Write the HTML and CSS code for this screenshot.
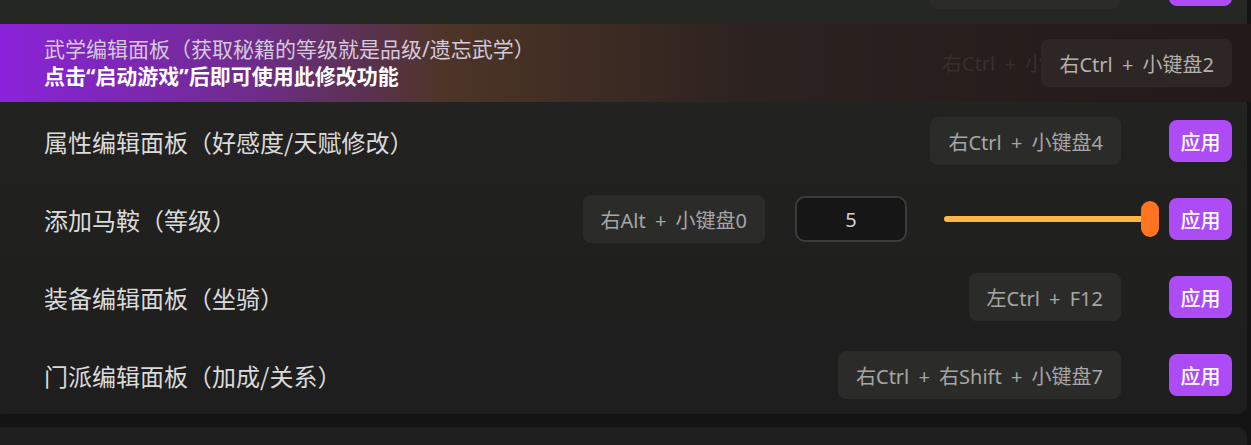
FILE: index.html
```html
<!DOCTYPE html>
<html lang="zh-CN">
<head>
    <meta charset="UTF-8">
    <meta name="viewport" content="width=device-width, initial-scale=1.0">
    <title>修改功能</title>

    <link rel="stylesheet" href="styles.css">
</head>
<body>
    <div class="panel">
        <div class="row">
            <div class="label">招式编辑面板</div>
            <div class="key">右Ctrl + 小键盘1</div>
            <button class="apply">应用</button>
        </div>

        <!-- hovered row: tip replaces label -->
        <div class="row hot">
            <div class="tip">
                <div class="tip-title">武学编辑面板（获取秘籍的等级就是品级/遗忘武学）</div>
                <div class="tip-note">点击“启动游戏”后即可使用此修改功能</div>
            </div>
            <span class="ghost">右Ctrl + 小键盘2</span>
            <div class="key">右Ctrl + 小键盘2</div>
        </div>

        <div class="row">
            <div class="label">属性编辑面板（好感度/天赋修改）</div>
            <div class="key">右Ctrl + 小键盘4</div>
            <button class="apply">应用</button>
        </div>

        <div class="row">
            <div class="label">添加马鞍（等级）</div>
            <div class="key">右Alt + 小键盘0</div>
            <div class="num">5</div>
            <div class="slider">
                <div class="track"></div>
                <div class="thumb"></div>
            </div>
            <button class="apply near">应用</button>
        </div>

        <div class="row">
            <div class="label">装备编辑面板（坐骑）</div>
            <div class="key">左Ctrl + F12</div>
            <button class="apply">应用</button>
        </div>

        <div class="row">
            <div class="label">门派编辑面板（加成/关系）</div>
            <div class="key">右Ctrl + 右Shift + 小键盘7</div>
            <button class="apply">应用</button>
        </div>
    </div>

    <div class="panel next"></div>
</body>
</html>
```

FILE: styles.css
```css
*{
    margin: 0;
    padding: 0;
    box-sizing: border-box
}

body{
    width: 1251px;
    height: 445px;
    overflow: hidden;
    background-color: #141414;
    font-family: "Noto Sans CJK SC", "Noto Sans", sans-serif;
}

.panel{
    width: 1253px;
    margin-left: -6px;
    margin-top: -54px;
    padding: 0 15px 0 50px;
    border-radius: 10px;
    background: linear-gradient(180deg, #262924 0, #242622 90px, #20201f 260px, #1e1e1e 100%);
}

.panel.next{
    margin-top: 13px;
    height: 60px;
    background: #1f1f1f;
}

.row{
    position: relative;
    height: 78px;
    display: flex;
    align-items: center;
}

.label{
    flex: 1;
    font-size: 24px;
    color: #dadada;
}

.key{
    height: 48px;
    padding: 0 18px;
    display: flex;
    align-items: center;
    border-radius: 8px;
    background-color: #2b2c2a;
    color: #a6a6a6;
    font-family: "Noto Sans", "Noto Sans CJK SC", sans-serif;
    font-size: 20px;
    word-spacing: 4px;
    white-space: nowrap;
}

.apply{
    width: 63px;
    height: 42px;
    margin-left: 48px;
    border: none;
    border-radius: 8px;
    background-color: #ad4bf6;
    color: #fff;
    font-family: inherit;
    font-size: 20px;
    font-weight: 500;
}

.apply.near{
    margin-left: 10px;
}

.num{
    width: 112px;
    height: 46px;
    margin-left: 30px;
    display: flex;
    align-items: center;
    justify-content: center;
    border: 2px solid #3c3c3c;
    border-radius: 10px;
    background-color: #161616;
    color: #d0d0d0;
    font-family: "Noto Sans", sans-serif;
    font-size: 20px;
}

.slider{
    position: relative;
    width: 215px;
    height: 36px;
    margin-left: 37px;
    display: flex;
    align-items: center;
}

.track{
    width: 100%;
    height: 6px;
    margin-right: 8px;
    border-radius: 3px;
    background-color: #ffb447;
}

.thumb{
    position: absolute;
    right: 0;
    top: 0;
    width: 18px;
    height: 36px;
    border-radius: 9px;
    background-color: #ff7421;
}

.row.hot{
    margin: 0 -19px 0 -50px;
    padding: 0 19px 0 50px;
    background: linear-gradient(90deg, #8c22dc 0, #6f2c8e 20%, #4d3526 36%, #2c2220 60%, #221918 100%);
}

.tip{
    flex: 1;
    font-family: "Noto Sans", "Noto Sans CJK SC", sans-serif;
    font-size: 21px;
    line-height: 27px;
}

.tip-title{
    color: #d4c8dc;
}

.tip-note{
    color: #fff;
    font-weight: 700;
}

.ghost{
    position: absolute;
    left: 948px;
    top: 24px;
    font-family: "Noto Sans", "Noto Sans CJK SC", sans-serif;
    font-size: 20px;
    word-spacing: 4px;
    color: #372f2c;
    white-space: nowrap;
}

.hot .key{
    position: relative;
    background-color: #2e2624;
    color: #b4b0ae;
}
```
